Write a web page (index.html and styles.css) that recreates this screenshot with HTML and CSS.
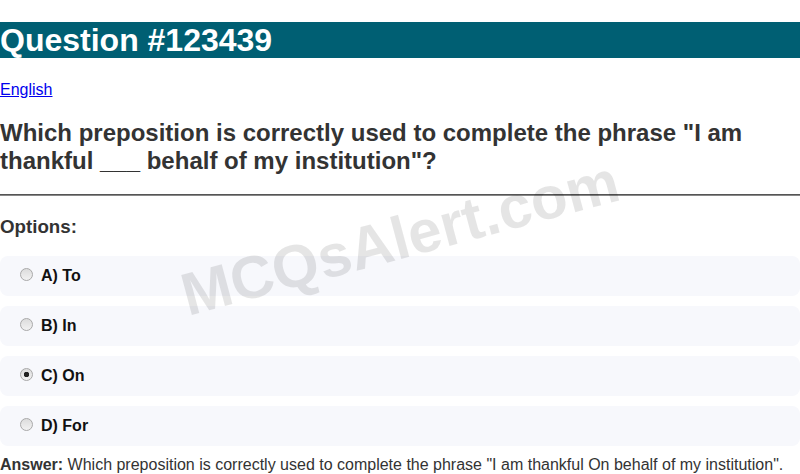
FILE: index.html
```html
<!DOCTYPE html>
<html>
<head>
<meta charset="utf-8">
<link rel="stylesheet" href="styles.css">
</head>
<body>
<h1 class="title">Question #123439</h1>
<p class="lang"><a href="#">English</a></p>
<h2 class="question">Which preposition is correctly used to complete the phrase "I am thankful ___ behalf of my institution"?</h2>
<hr class="rule">
<h3 class="opts-title">Options:</h3>
<div class="options">
  <label class="option"><input type="radio" name="q"> A) To</label>
  <label class="option"><input type="radio" name="q"> B) In</label>
  <label class="option"><input type="radio" name="q" checked> C) On</label>
  <label class="option"><input type="radio" name="q"> D) For</label>
</div>
<p class="answer"><strong>Answer:</strong> Which preposition is correctly used to complete the phrase "I am thankful On behalf of my institution".</p>
<div class="watermark">MCQsAlert.com</div>
</body>
</html>
```
FILE: styles.css
```css
html, body {
  margin: 0;
  padding: 0;
  background: #fff;
  font-family: "Liberation Sans", Arial, sans-serif;
  color: #333;
  overflow: hidden;
}
.title {
  font-size: 32px;
  line-height: 36px;
  margin: 22px 0 23px;
  background: #005f73;
  color: #fff;
  font-weight: bold;
}
.lang {
  margin: 16px 0;
  font-size: 16px;
  line-height: 18px;
}
.lang a {
  color: #0000ee;
}
.question {
  font-size: 24px;
  line-height: 28px;
  margin: 20px 0 18.5px;
  color: #333;
}
.rule {
  margin: 0;
  border: 0;
  border-top: 1px solid #555;
  border-bottom: 1px solid #888;
  height: 0;
}
.opts-title {
  font-size: 18.72px;
  line-height: 21px;
  margin: 20.5px 0 18.5px;
}
.options {
  display: flex;
  flex-direction: column;
  gap: 10px;
}
.option {
  display: flex;
  align-items: center;
  height: 40px;
  padding: 0 15px;
  background: #f7f8fc;
  border-radius: 8px;
  font-weight: bold;
  font-size: 16px;
  color: #111;
  gap: 5px;
}
.option input {
  appearance: none;
  -webkit-appearance: none;
  margin: 0 3px 2px 5px;
  width: 13px;
  height: 13px;
  border-radius: 50%;
  border: 1px solid #a9a9a9;
  background: linear-gradient(#dcdcdc, #f2f2f2);
  box-sizing: border-box;
  position: relative;
}
.option input:checked {
  background: radial-gradient(circle, #222 0 2.5px, transparent 3px), linear-gradient(#dcdcdc, #f2f2f2);
}
.answer {
  margin: 10px 0 0;
  font-size: 16px;
  line-height: 18px;
  color: #333;
}
.answer strong {
  color: #333;
}
.watermark {
  position: absolute;
  left: 400px;
  top: 238px;
  transform: translate(-50%, -50%) rotate(-15deg);
  font-size: 60px;
  font-weight: bold;
  color: rgba(0, 0, 0, 0.1);
  white-space: nowrap;
  pointer-events: none;
}
```
